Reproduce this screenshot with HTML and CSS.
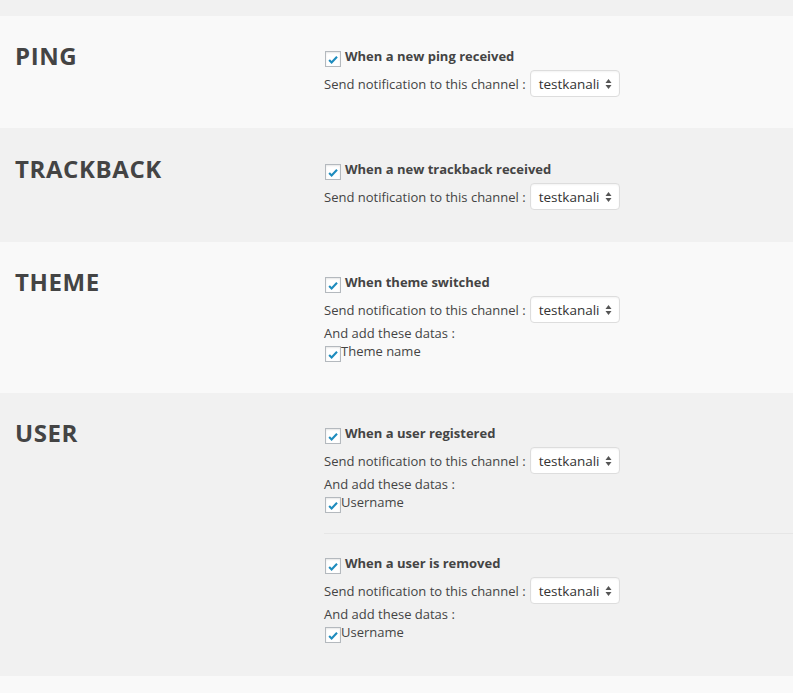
FILE: index.html
```html
<!DOCTYPE html>
<html lang="en">
<head>
<meta charset="utf-8">
<title>Notification settings</title>
<link rel="stylesheet" href="styles.css">
</head>
<body>
<div class="page">
  <div class="strip strip-top"></div>

  <section class="sec sec-light">
    <h2 class="sec-title">PING</h2>
    <div class="sec-body">
      <div class="item">
        <label class="check-row main"><span class="cb"><svg viewBox="0 0 16 16" width="16" height="16"><path d="M3.6 9.2 L6.4 12 L12.6 5.4" /></svg></span><strong>When a new ping received</strong></label>
        <div class="channel-row"><span>Send notification to this channel :</span><span class="select"><span class="select-val">testkanali</span><svg class="arrows" viewBox="0 0 7 12" width="7" height="12"><path d="M0.5 5 L3.5 1 L6.5 5 Z M0.5 7 L3.5 11 L6.5 7 Z"/></svg></span></div>
      </div>
    </div>
  </section>

  <section class="sec sec-dark sec-tall">
    <h2 class="sec-title">TRACKBACK</h2>
    <div class="sec-body">
      <div class="item">
        <label class="check-row main"><span class="cb"><svg viewBox="0 0 16 16" width="16" height="16"><path d="M3.6 9.2 L6.4 12 L12.6 5.4" /></svg></span><strong>When a new trackback received</strong></label>
        <div class="channel-row"><span>Send notification to this channel :</span><span class="select"><span class="select-val">testkanali</span><svg class="arrows" viewBox="0 0 7 12" width="7" height="12"><path d="M0.5 5 L3.5 1 L6.5 5 Z M0.5 7 L3.5 11 L6.5 7 Z"/></svg></span></div>
      </div>
    </div>
  </section>

  <section class="sec sec-light">
    <h2 class="sec-title">THEME</h2>
    <div class="sec-body">
      <div class="item">
        <label class="check-row main"><span class="cb"><svg viewBox="0 0 16 16" width="16" height="16"><path d="M3.6 9.2 L6.4 12 L12.6 5.4" /></svg></span><strong>When theme switched</strong></label>
        <div class="channel-row"><span>Send notification to this channel :</span><span class="select"><span class="select-val">testkanali</span><svg class="arrows" viewBox="0 0 7 12" width="7" height="12"><path d="M0.5 5 L3.5 1 L6.5 5 Z M0.5 7 L3.5 11 L6.5 7 Z"/></svg></span></div>
        <div class="datas">And add these datas :</div>
        <label class="check-row data"><span class="cb"><svg viewBox="0 0 16 16" width="16" height="16"><path d="M3.6 9.2 L6.4 12 L12.6 5.4" /></svg></span>Theme name</label>
      </div>
    </div>
  </section>

  <section class="sec sec-dark sec-user">
    <h2 class="sec-title">USER</h2>
    <div class="sec-body">
      <div class="item">
        <label class="check-row main"><span class="cb"><svg viewBox="0 0 16 16" width="16" height="16"><path d="M3.6 9.2 L6.4 12 L12.6 5.4" /></svg></span><strong>When a user registered</strong></label>
        <div class="channel-row"><span>Send notification to this channel :</span><span class="select"><span class="select-val">testkanali</span><svg class="arrows" viewBox="0 0 7 12" width="7" height="12"><path d="M0.5 5 L3.5 1 L6.5 5 Z M0.5 7 L3.5 11 L6.5 7 Z"/></svg></span></div>
        <div class="datas">And add these datas :</div>
        <label class="check-row data"><span class="cb"><svg viewBox="0 0 16 16" width="16" height="16"><path d="M3.6 9.2 L6.4 12 L12.6 5.4" /></svg></span>Username</label>
      </div>
      <div class="item item-sep">
        <label class="check-row main"><span class="cb"><svg viewBox="0 0 16 16" width="16" height="16"><path d="M3.6 9.2 L6.4 12 L12.6 5.4" /></svg></span><strong>When a user is removed</strong></label>
        <div class="channel-row"><span>Send notification to this channel :</span><span class="select"><span class="select-val">testkanali</span><svg class="arrows" viewBox="0 0 7 12" width="7" height="12"><path d="M0.5 5 L3.5 1 L6.5 5 Z M0.5 7 L3.5 11 L6.5 7 Z"/></svg></span></div>
        <div class="datas">And add these datas :</div>
        <label class="check-row data"><span class="cb"><svg viewBox="0 0 16 16" width="16" height="16"><path d="M3.6 9.2 L6.4 12 L12.6 5.4" /></svg></span>Username</label>
      </div>
    </div>
  </section>

  <div class="strip strip-bottom"></div>
</div>
</body>
</html>
```
FILE: styles.css
```css
html, body {
  margin: 0;
  padding: 0;
}
body {
  font-family: "Open Sans", "Noto Sans", sans-serif;
  font-size: 13px;
  line-height: 18px;
  color: #444;
  background: #f9f9f9;
}
.page {
  display: flex;
  flex-direction: column;
  min-height: 693px;
}
.strip-top {
  height: 16px;
  background: #f1f1f1;
}
.strip-bottom {
  flex: 1;
  background: #f9f9f9;
}
.sec {
  display: grid;
  grid-template-columns: 309px 1fr;
  padding: 11px 0 11px 15px;
}
.sec-tall {
  padding-top: 12px;
  padding-bottom: 12px;
}
.sec-user {
  padding-bottom: 13px;
}
.sec-light { background: #f9f9f9; }
.sec-dark { background: #f1f1f1; }
.sec-title {
  margin: 13px 0 0;
  font-size: 24px;
  line-height: 32px;
  font-weight: 700;
  letter-spacing: 0.6px;
  color: #444;
}
.sec-body {
  display: flex;
  flex-direction: column;
}
.item {
  padding: 20px 0;
}
.item-sep {
  border-top: 1px solid #e6e6e6;
  padding-top: 20px;
}
.check-row {
  display: flex;
  align-items: flex-start;
}
.check-row strong {
  font-weight: 700;
}
.cb {
  box-sizing: border-box;
  width: 16px;
  height: 16px;
  margin: 4px 4px 0 1px;
  border: 1px solid #b4b9be;
  background: #fff;
  box-shadow: inset 0 1px 2px rgba(0, 0, 0, 0.1);
  display: flex;
  align-items: center;
  justify-content: center;
  flex: none;
}
.cb svg {
  width: 14px;
  height: 14px;
  fill: none;
  stroke: #1e8cbe;
  stroke-width: 2.4;
  stroke-linecap: butt;
  stroke-linejoin: miter;
}
.data .cb {
  margin-right: 0;
}
.channel-row {
  display: flex;
  align-items: center;
  gap: 4px;
  margin-top: 3px;
}
.select {
  box-sizing: border-box;
  display: flex;
  align-items: center;
  justify-content: space-between;
  width: 90px;
  height: 27px;
  padding: 0 7px 0 8px;
  background: #fff;
  border: 1px solid #ddd;
  border-radius: 4px;
  box-shadow: inset 0 1px 2px rgba(0, 0, 0, 0.05);
  font-size: 13.5px;
  color: #333;
}
.arrows {
  fill: #555;
}
.datas {
  margin-top: 1px;
}
```
